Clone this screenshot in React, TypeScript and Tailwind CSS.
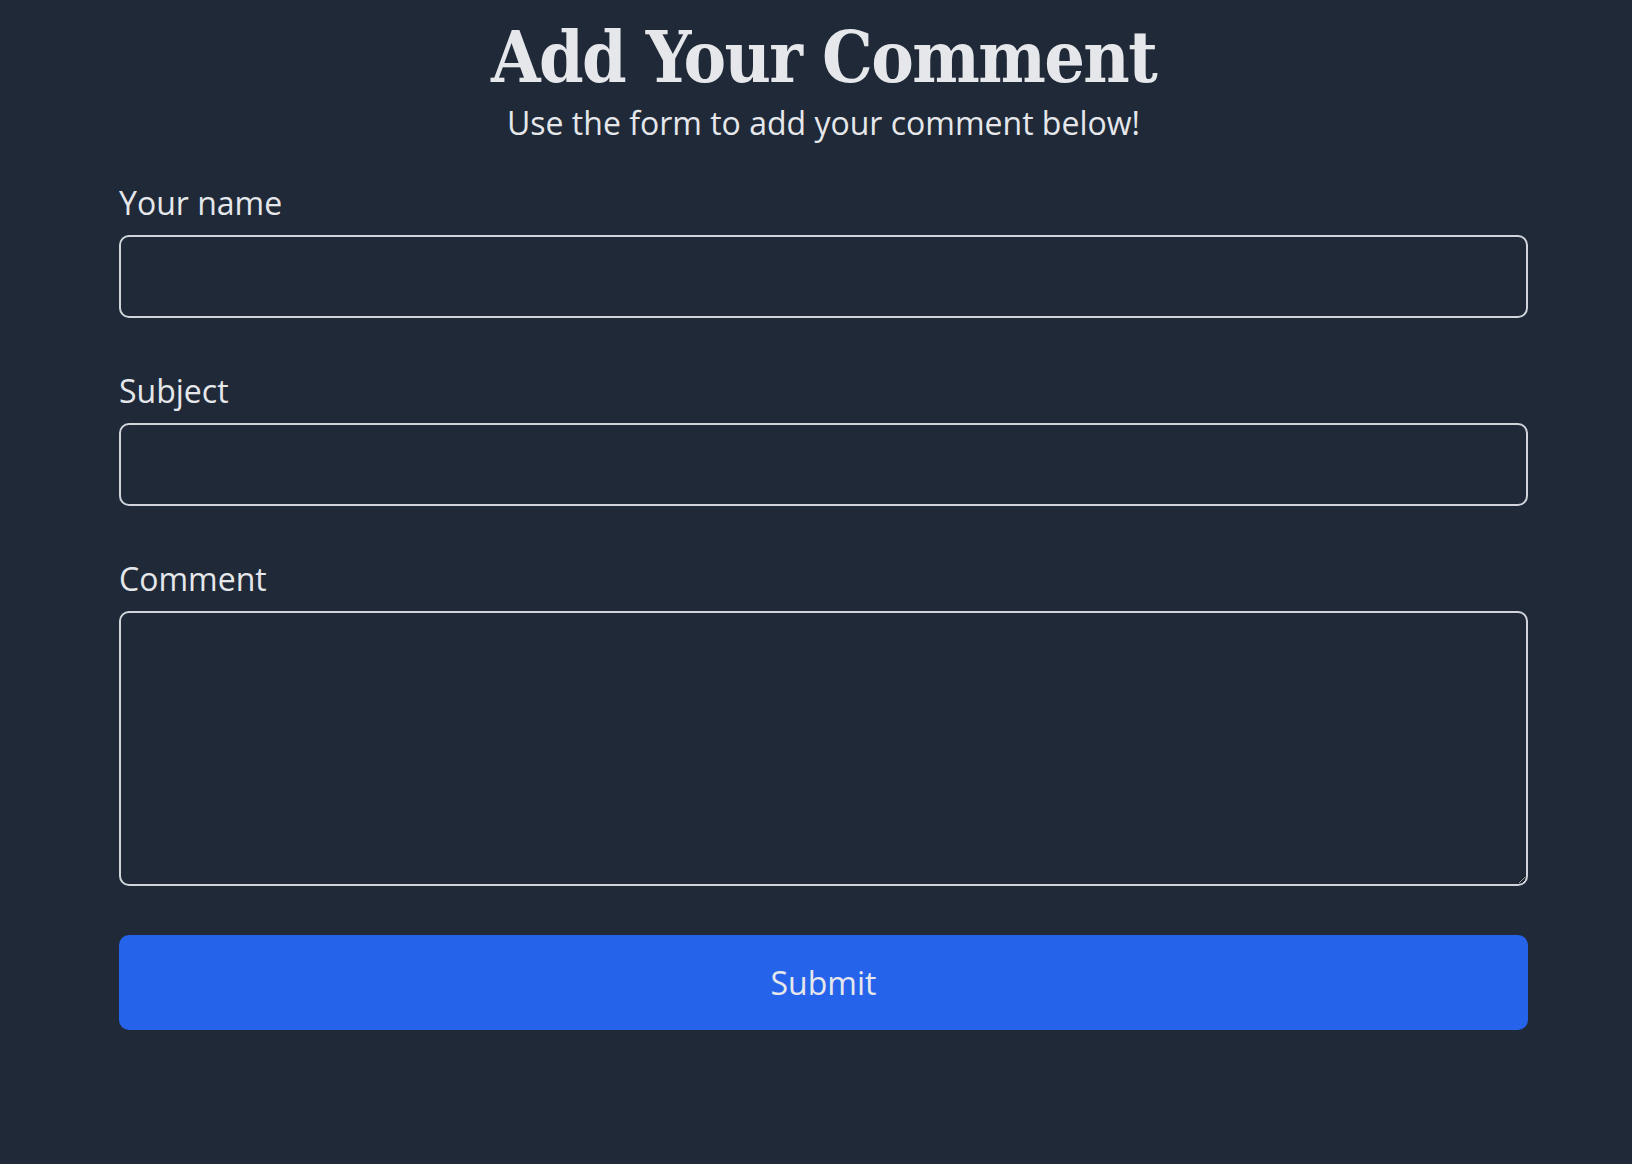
export default function App() {
  return (
    <div className="min-h-screen bg-[#1f2937] pl-[15px] font-['Open_Sans',sans-serif] text-[#e5e7eb]">
      <div className="mx-auto w-[1409px] pt-[22px]">
        <h1 className="text-center font-['DejaVu_Serif_Condensed','DejaVu_Serif',serif] text-[71px] leading-[71px] font-bold tracking-[-1.6px] text-[#e5e7eb]">
          Add Your Comment
        </h1>
        <p className="mt-[10px] text-center text-[32px] leading-[40px]">
          Use the form to add your comment below!
        </p>

        <form className="mt-[40px] flex flex-col" onSubmit={(e) => e.preventDefault()}>
          <label htmlFor="name" className="mb-[12px] text-[32px] leading-[40px]">
            Your name
          </label>
          <input
            id="name"
            type="text"
            className="h-[83px] rounded-[10px] border-2 border-[#d1d5db] bg-transparent px-4 text-[32px] outline-none"
          />

          <label htmlFor="subject" className="mt-[53px] mb-[12px] text-[32px] leading-[40px]">
            Subject
          </label>
          <input
            id="subject"
            type="text"
            className="h-[83px] rounded-[10px] border-2 border-[#d1d5db] bg-transparent px-4 text-[32px] outline-none"
          />

          <label htmlFor="comment" className="mt-[53px] mb-[12px] text-[32px] leading-[40px]">
            Comment
          </label>
          <textarea
            id="comment"
            className="h-[275px] rounded-[10px] border-2 border-[#d1d5db] bg-transparent px-4 py-2 text-[32px] outline-none [color-scheme:dark]"
          />

          <button
            type="submit"
            className="mt-[49px] h-[95px] rounded-[10px] bg-[#2563eb] text-[32px] text-[#e5e7eb]"
          >
            Submit
          </button>
        </form>
      </div>
    </div>
  );
}
